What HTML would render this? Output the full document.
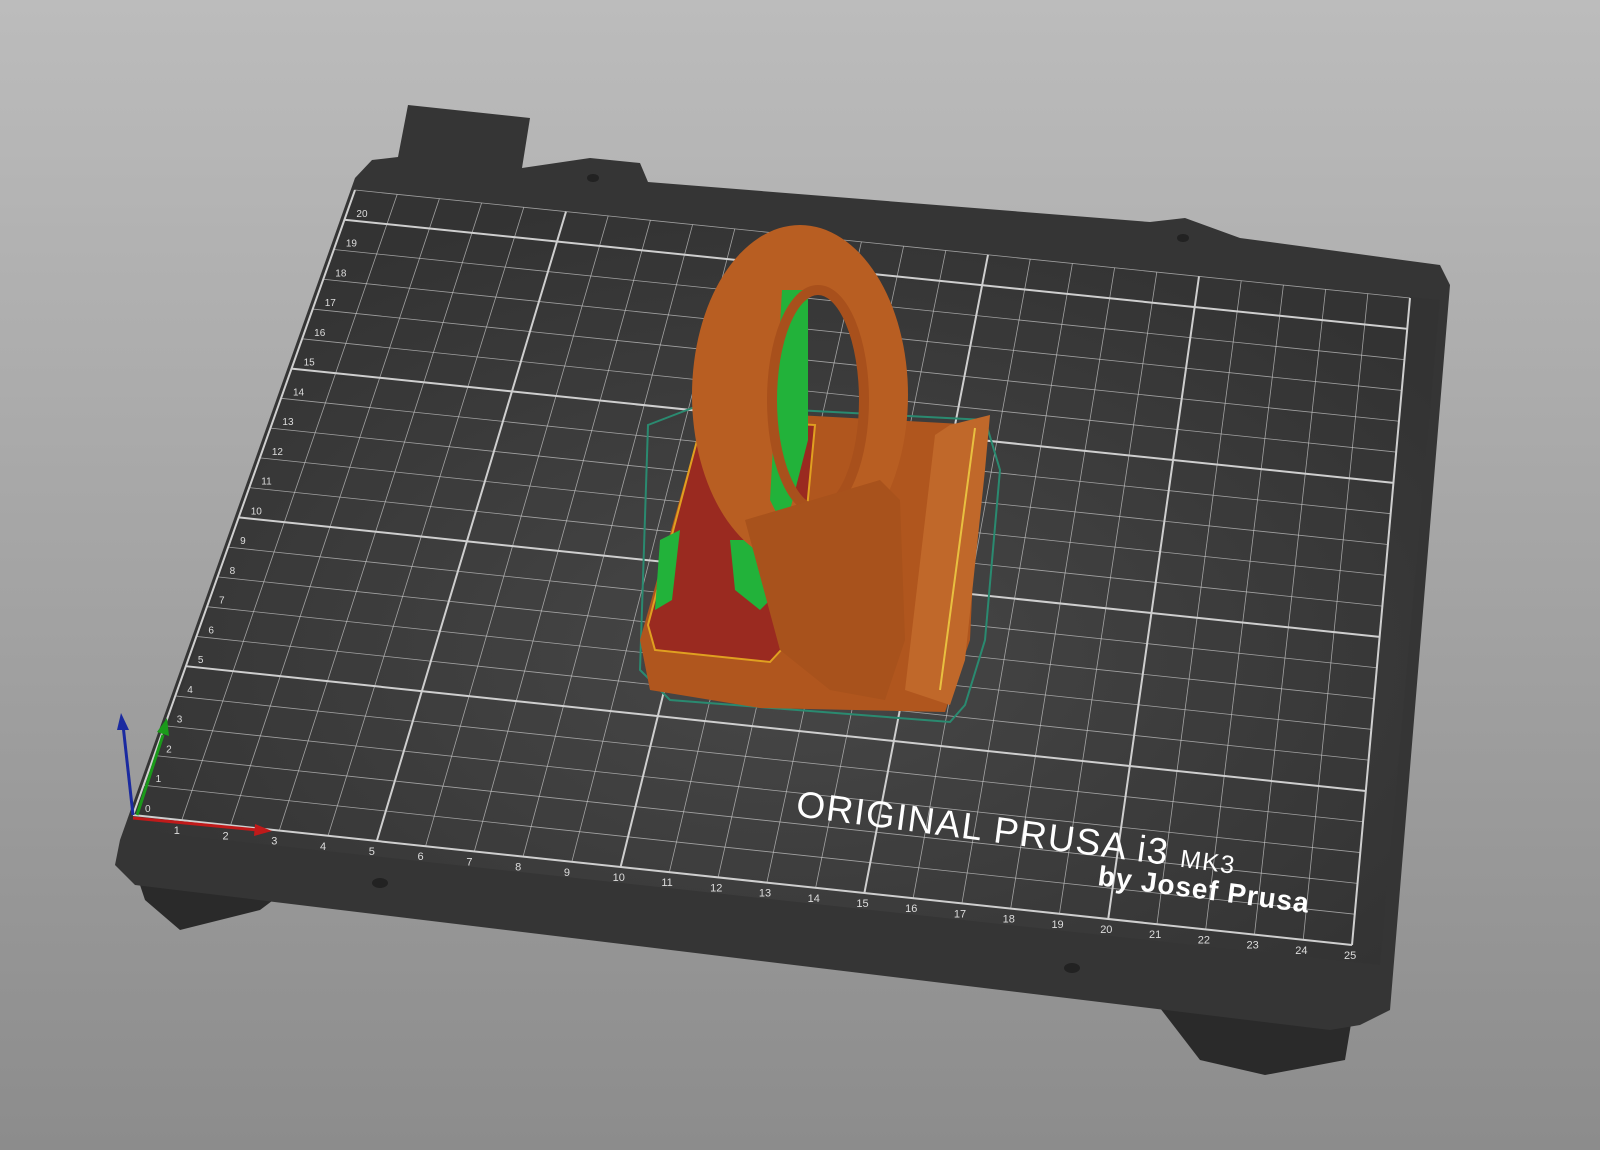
<!DOCTYPE html>
<html><head><meta charset="utf-8"><style>
html,body{margin:0;padding:0;width:1600px;height:1150px;overflow:hidden;background:linear-gradient(#bcbcbc,#8c8c8c);}
svg{display:block}
text{font-family:"Liberation Sans",sans-serif;}
</style></head><body>
<svg id="s" width="1600" height="1150" viewBox="0 0 1600 1150">
<defs>
<radialGradient id="bedg" cx="0.5" cy="0.6" r="0.6"><stop offset="0" stop-color="#474747"/><stop offset="1" stop-color="#333"/></radialGradient>
</defs>
<polygon points="135,870 300,880 260,910 180,930 145,900" fill="#2a2a2a"/>
<polygon points="1150,995 1355,1000 1345,1060 1265,1075 1200,1060" fill="#2a2a2a"/>
<polygon points="408,105 530,118 522,168 590,158 640,163 648,182 1150,222 1185,218 1240,238 1440,265 1450,285 1390,1010 1360,1025 1330,1030 135,885 115,865 120,840 355,178 372,160 398,157" fill="#353535"/>
<polygon points="355,190 1440,300 1380,965 133,830" fill="url(#bedg)"/>
<g id="grid" stroke="#cfcfcf" fill="none"></g>
<g id="labels" fill="#ddd" font-size="11"></g>
<polygon points="648,425 700,405 985,420 1000,470 985,640 965,705 950,722 670,700 640,670" fill="none" stroke="#2a8a70" stroke-width="2"/>
<polygon points="705,410 980,425 970,640 945,712 760,708 650,690 640,640" fill="#b0561e"/>
<polygon points="703,418 815,425 795,635 770,662 655,650 648,625" fill="#9a2a20" stroke="#e0a020" stroke-width="2"/>
<polygon points="730,540 775,540 785,585 760,610 735,590" fill="#22b23a"/>
<polygon points="660,540 680,530 672,600 655,610" fill="#22b23a"/>
<path fill-rule="evenodd" fill="#b85e22" d="M692,395 a108,170 0 1,0 216,0 a108,170 0 1,0 -216,0 Z M772,400 a46,110 0 1,0 92,0 a46,110 0 1,0 -92,0 Z"/>
<polygon points="782,290 808,290 808,440 785,530 770,500" fill="#22b23a"/>
<ellipse cx="818" cy="400" rx="46" ry="110" fill="none" stroke="#a8501c" stroke-width="10"/>
<polygon points="745,520 880,480 900,500 905,640 885,700 830,690 780,650" fill="#a8521c"/>
<polygon points="950,425 990,415 985,470 965,660 950,705 905,690 935,435" fill="#c0682a"/>
<line x1="975" y1="428" x2="940" y2="690" stroke="#e8c040" stroke-width="2"/>
<line x1="133" y1="815" x2="123" y2="725" stroke="#1a2aa0" stroke-width="3"/>
<polygon points="117,730 129,730 121,713" fill="#1a2aa0"/>
<line x1="137" y1="815" x2="163" y2="735" stroke="#1a9a1a" stroke-width="3"/>
<polygon points="157,732 169,736 167,718" fill="#1a9a1a"/>
<line x1="133" y1="818" x2="258" y2="830" stroke="#c01a1a" stroke-width="3"/>
<polygon points="255,824 254,836 272,831" fill="#c01a1a"/>
<text x="795" y="816" font-size="37" letter-spacing="1.5" fill="#fff" transform="rotate(7.5 795 816)">ORIGINAL PRUSA i3 <tspan font-size="25" dx="0">MK3</tspan></text>
<text x="1097" y="885" font-size="28" font-weight="bold" letter-spacing="1" fill="#fff" transform="rotate(7.5 1097 885)">by Josef Prusa</text>
<ellipse cx="593" cy="178" rx="6" ry="4" fill="#222"/>
<ellipse cx="1183" cy="238" rx="6" ry="4" fill="#222"/>
<ellipse cx="380" cy="883" rx="8" ry="5" fill="#222"/>
<ellipse cx="1072" cy="968" rx="8" ry="5" fill="#222"/>
</svg>
<script>
var P={tl:[355,190],tr:[1410,298],br:[1352,945],bl:[133,815]};
function pt(u,v){
 var bx=P.bl[0]+(P.br[0]-P.bl[0])*u, by=P.bl[1]+(P.br[1]-P.bl[1])*u;
 var tx=P.tl[0]+(P.tr[0]-P.tl[0])*u, ty=P.tl[1]+(P.tr[1]-P.tl[1])*u;
 return [bx+(tx-bx)*v, by+(ty-by)*v];}
var g=document.getElementById('grid'),L=document.getElementById('labels'),h='';
for(var i=0;i<=25;i++){var a=pt(i/25,0),b=pt(i/25,1),w=(i%5==0)?2:0.8;
 h+='<line x1="'+a[0]+'" y1="'+a[1]+'" x2="'+b[0]+'" y2="'+b[1]+'" stroke-width="'+w+'" stroke-opacity="'+(w>1?1:0.7)+'"/>';}
for(var j=0;j<=21;j++){var a=pt(0,j/21),b=pt(1,j/21),w=(j%5==0)?2:0.8;
 h+='<line x1="'+a[0]+'" y1="'+a[1]+'" x2="'+b[0]+'" y2="'+b[1]+'" stroke-width="'+w+'" stroke-opacity="'+(w>1?1:0.7)+'"/>';}
g.innerHTML=h;var t='';
for(var i=1;i<=25;i++){var a=pt(i/25,0);t+='<text x="'+(a[0]-8)+'" y="'+(a[1]+14)+'">'+i+'</text>';}
for(var j=0;j<=20;j++){var a=pt(0,j/21);t+='<text x="'+(a[0]+12)+'" y="'+(a[1]-3)+'" font-size="10">'+j+'</text>';}
L.innerHTML=t;
</script>
</body></html>
